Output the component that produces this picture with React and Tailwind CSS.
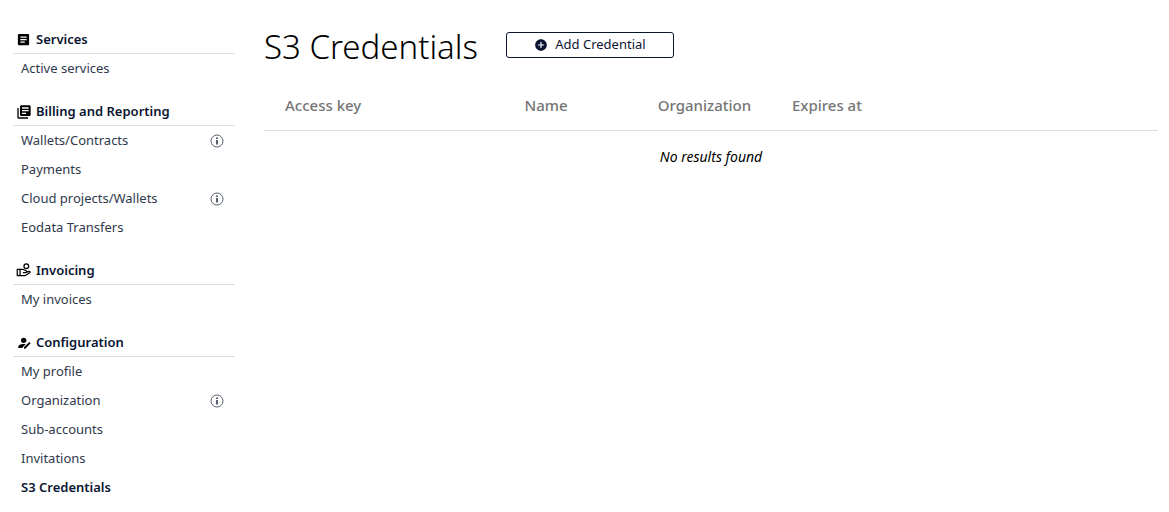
import { MdArticle, MdLibraryBooks, MdAddCircle } from "react-icons/md";

const HandCoinIcon = () => (
  <svg width="15" height="15" viewBox="0 0 24 24" fill="none" stroke="currentColor" strokeWidth="2" strokeLinejoin="round" aria-hidden="true">
    <circle cx="16.5" cy="5" r="3.8" />
    <path d="M2 10h4.5v10H2zM6.5 10h4.5l5 2.5c1.6 1 1 3-.8 3H11M16 15l5-1.5c1.6-.3 2.200 1.400 1 2.200L15 20H6.500" />
  </svg>
);

const UserEditIcon = () => (
  <svg width="16" height="16" viewBox="0 0 24 24" fill="currentColor" aria-hidden="true">
    <circle cx="11.5" cy="8" r="4" />
    <path d="M3.5 19.500v-2C3.500 15 7 13.500 10.500 13.500c1.500 0 2.800.2 4 .5L9 19.500z" />
    <path d="M12 20.500v-2l8-8 2 2-8 8z" />
  </svg>
);

const InfoIcon = () => (
  <svg width="14" height="14" viewBox="0 0 14 14" fill="none" aria-hidden="true">
    <circle cx="7" cy="7" r="6" stroke="currentColor" strokeWidth="0.8" />
    <path d="M7 3.5v1.5M7 6v4.5" stroke="currentColor" strokeWidth="1.6" />
  </svg>
);

const sections = [
  {
    title: "Services",
    icon: <MdArticle size={15} />,
    items: [{ label: "Active services" }],
  },
  {
    title: "Billing and Reporting",
    icon: <MdLibraryBooks size={16} />,
    items: [
      { label: "Wallets/Contracts", info: true },
      { label: "Payments" },
      { label: "Cloud projects/Wallets", info: true },
      { label: "Eodata Transfers" },
    ],
  },
  {
    title: "Invoicing",
    icon: <HandCoinIcon />,
    items: [{ label: "My invoices" }],
  },
  {
    title: "Configuration",
    icon: <UserEditIcon />,
    items: [
      { label: "My profile" },
      { label: "Organization", info: true },
      { label: "Sub-accounts" },
      { label: "Invitations" },
      { label: "S3 Credentials", active: true },
    ],
  },
];

const Sidebar = () => (
  <nav className="w-[222px] shrink-0 flex flex-col gap-[15px]">
    {sections.map((section) => (
      <section key={section.title}>
        <h2 className="h-7 flex items-center border-b border-[#dedede] pl-[3px] text-[13px] font-semibold text-[#0b1531]">
          <span className="w-5 flex text-black">{section.icon}</span>
          {section.title}
        </h2>
        <ul>
          {section.items.map((item) => (
            <li key={item.label} className="h-[29px] flex items-center justify-between pl-2 pr-[11px] text-[13px] text-[#2f394b]">
              <a href="#" className={item.active ? "font-semibold text-[#0b1531]" : ""}>
                {item.label}
              </a>
              {item.info && (
                <button type="button" aria-label={`About ${item.label}`}>
                  <InfoIcon />
                </button>
              )}
            </li>
          ))}
        </ul>
      </section>
    ))}
  </nav>
);

export default function App() {
  return (
    <div className="flex gap-[29px] pl-[13px] pr-[11px] pt-[26px] bg-white text-black font-['Noto_Sans',sans-serif]">
      <Sidebar />
      <main className="flex-1 min-w-0">
        <div className="h-[38px] flex items-center gap-7">
          <h1 className="pt-1 text-[33px] leading-10 font-light">S3 Credentials</h1>
          <button
            type="button"
            className="w-[168px] h-[26px] flex items-center justify-center gap-[7px] rounded-[3px] border border-[#0b1531] text-[13px] text-[#0b1531]"
          >
            <MdAddCircle size={14} /> Add Credential
          </button>
        </div>

        <table className="w-full mt-4 table-fixed text-left">
          <thead>
            <tr className="h-[50px] border-b border-[#dedede] text-[15px] text-[#757575]">
              <th className="w-[26.8%] pl-[21px] font-medium">Access key</th>
              <th className="w-[14.9%] pl-[21px] font-medium">Name</th>
              <th className="w-[15%] pl-[21px] font-medium">Organization</th>
              <th className="pl-[21px] font-medium">Expires at</th>
            </tr>
          </thead>
          <tbody>
            <tr className="h-[53px]">
              <td colSpan={4} className="text-center text-[14px] italic">
                No results found
              </td>
            </tr>
          </tbody>
        </table>
      </main>
    </div>
  );
}
